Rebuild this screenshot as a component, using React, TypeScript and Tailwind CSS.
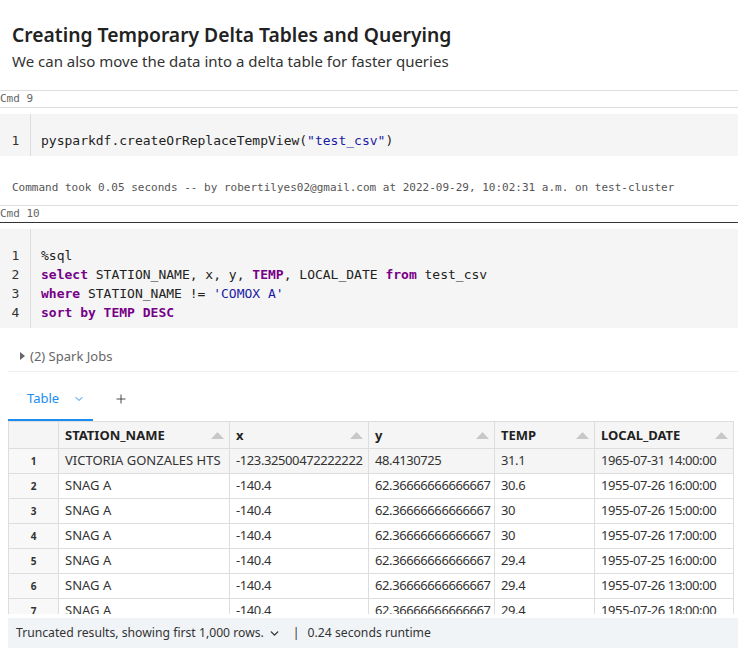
import { ChevronDown, Plus } from 'lucide-react';

const rows = [
  ['VICTORIA GONZALES HTS', '-123.32500472222222', '48.4130725', '31.1', '1965-07-31 14:00:00'],
  ['SNAG A', '-140.4', '62.36666666666667', '30.6', '1955-07-26 16:00:00'],
  ['SNAG A', '-140.4', '62.36666666666667', '30', '1955-07-26 15:00:00'],
  ['SNAG A', '-140.4', '62.36666666666667', '30', '1955-07-26 17:00:00'],
  ['SNAG A', '-140.4', '62.36666666666667', '29.4', '1955-07-25 16:00:00'],
  ['SNAG A', '-140.4', '62.36666666666667', '29.4', '1955-07-26 13:00:00'],
  ['SNAG A', '-140.4', '62.36666666666667', '29.4', '1955-07-26 18:00:00'],
];

const columns = [
  { name: 'STATION_NAME', w: 'w-[171px]' },
  { name: 'x', w: 'w-[139px]' },
  { name: 'y', w: 'w-[126px]' },
  { name: 'TEMP', w: 'w-[100px]' },
  { name: 'LOCAL_DATE', w: 'w-[139px]' },
];

const mono = "font-['DejaVu_Sans_Mono',monospace]";
const kw = 'font-bold text-[#770088]';

function SortArrow() {
  return (
    <svg width="13" height="7" viewBox="0 0 13 7" className="shrink-0">
      <path d="M0 7 L6.5 0 L13 7 Z" fill="#c8c8c8" />
    </svg>
  );
}

function CodeCell({ lines }: { lines: React.ReactNode[] }) {
  return (
    <div className={`flex bg-[#f5f5f5] text-[13px] leading-[19px] text-[#222] ${mono}`}>
      <div className="w-[31px] border-r border-[#ddd] pt-[17px] pb-[6px] text-center text-[#333]">
        {lines.map((_, i) => (
          <div key={i} className="pl-[1px]">{i + 1}</div>
        ))}
      </div>
      <div className="pt-[17px] pb-[6px] pl-[10px]">
        {lines.map((l, i) => (
          <div key={i} className="whitespace-pre">{l}</div>
        ))}
      </div>
    </div>
  );
}

export default function App() {
  return (
    <div className="w-[738px] h-[650px] overflow-hidden bg-white font-['Noto_Sans',sans-serif] text-[#333]">
      <div className="px-3 pt-[21px]">
        <h2 className="text-[19.3px] font-semibold leading-[28px] text-[#222]">
          Creating Temporary Delta Tables and Querying
        </h2>
        <p className="text-[15px] leading-[24px] text-[#333]">We can also move the data into a delta table for faster queries</p>
      </div>

      <div className={`mt-[17px] border-t border-b border-[#ddd] text-[11px] leading-[16px] text-[#666] ${mono}`}>Cmd 9</div>

      <div className="pt-[6px]">
        <CodeCell
          lines={[
            <span>
              pysparkdf.createOrReplaceTempView(<span className="text-[#1a1aa6]">"test_csv"</span>)
            </span>,
          ]}
        />
      </div>

      <div className={`px-3 pt-[25px] pb-[10px] text-[11px] leading-[14px] text-[#555] ${mono}`}>
        Command took 0.05 seconds -- by robertilyes02@gmail.com at 2022-09-29, 10:02:31 a.m. on test-cluster
      </div>

      <div className={`border-t border-b border-t-[#ddd] border-b-[#333] text-[11px] leading-[16px] text-[#666] ${mono}`}>Cmd 10</div>

      <div className="pt-[6px]">
        <CodeCell
          lines={[
            <span>%sql</span>,
            <span>
              <span className={kw}>select</span> STATION_NAME, x, y, <span className={kw}>TEMP</span>, LOCAL_DATE{' '}
              <span className={kw}>from</span> test_csv
            </span>,
            <span>
              <span className={kw}>where</span> STATION_NAME != <span className="text-[#1a1aa6]">'COMOX A'</span>
            </span>,
            <span className={kw}>sort by TEMP DESC</span>,
          ]}
        />
      </div>

      <div className="flex items-center gap-[5px] pl-[20px] pt-[19px] text-[13px] leading-[18px] text-[#666]">
        <svg width="5" height="8" viewBox="0 0 5 8">
          <path d="M0 0 L5 4 L0 8 Z" fill="#666" />
        </svg>
        <span>(2) Spark Jobs</span>
      </div>

      <div className="ml-[8px] mt-[6px] border-t border-[#eee]">
        <div className="flex h-[49px] items-stretch">
          <div className="flex w-[85px] items-center gap-[14px] border-b-2 border-[#1b8cf2] pl-[19px] pt-[6px] text-[13px] text-[#1b8cf2]">
            <span>Table</span>
            <ChevronDown size={12} strokeWidth={2} />
          </div>
          <div className="flex items-center pl-[21px] pt-[4px] text-[#333]">
            <Plus size={14} strokeWidth={1.5} />
          </div>
        </div>

        <div className="h-[193px] overflow-hidden">
          <table className="w-[725px] table-fixed border-collapse text-[13px] text-[#333]">
            <thead>
              <tr className="h-[27px] bg-[#f5f5f5]">
                <th className="w-[50px] border border-[#ddd]"></th>
                {columns.map((c) => (
                  <th key={c.name} className={`${c.w} border border-[#ddd] pl-[6px] pr-[5px] pt-[1px] text-left font-bold text-[#222]`}>
                    <div className="flex items-center justify-between">
                      <span>{c.name}</span>
                      <SortArrow />
                    </div>
                  </th>
                ))}
              </tr>
            </thead>
            <tbody>
              {rows.map((r, i) => (
                <tr key={i} className={`h-[25px] ${i === 0 ? 'bg-[#f5f5f5]' : 'bg-white'}`}>
                  <td className="border border-[#ddd] bg-[#f8f8f8] text-center text-[10px] font-bold text-[#333]">{i + 1}</td>
                  {r.map((v, j) => (
                    <td
                      key={j}
                      className={`overflow-hidden whitespace-nowrap border border-[#ddd] pl-[6px] pr-[2px] ${j > 0 ? 'tracking-[-0.4px]' : ''}`}
                    >
                      {v}
                    </td>
                  ))}
                </tr>
              ))}
            </tbody>
          </table>
        </div>

        <div className="mt-[4px] flex h-[30px] items-center gap-[8px] bg-[#f1f4f7] pl-[8px] text-[12.2px] text-[#333]">
          <span>Truncated results, showing first 1,000 rows.</span>
          <ChevronDown size={13} strokeWidth={2.5} className="-ml-[4px]" />
          <span className="ml-[4px]">|</span>
          <span>0.24 seconds runtime</span>
        </div>
      </div>
    </div>
  );
}
